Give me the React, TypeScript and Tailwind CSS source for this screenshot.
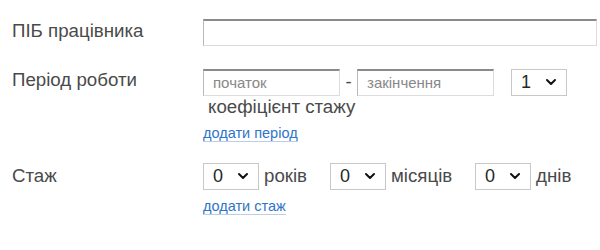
import { ChevronDown } from 'lucide-react'

function Select({ value }: { value: string }) {
  return (
    <div className="w-[56px] h-[27px] border border-[#c8c8c8] bg-white flex items-center justify-between pl-[9px] pr-[7px] text-[18px] text-[#1e2a1e]">
      <span>{value}</span>
      <ChevronDown size={16} strokeWidth={3} className="text-[#111]" />
    </div>
  )
}

function TextInput({ placeholder, className }: { placeholder?: string; className: string }) {
  return (
    <input
      type="text"
      placeholder={placeholder}
      className={`${className} h-[27px] border border-[#dcdcdc] border-t-[#8a8a8a] border-l-[#b8b8b8] border-t-2 bg-white px-[9px] text-[15px] text-[#333] placeholder:text-[#888] outline-none`}
    />
  )
}

function AddLink({ children }: { children: string }) {
  return (
    <a href="#" className="text-[14.5px] text-[#2f74c9] border-b border-[#b9cfe9] leading-[16px]">
      {children}
    </a>
  )
}

export default function App() {
  return (
    <div className="w-[600px] h-[250px] bg-white pl-[12px] pr-[3px] font-['Liberation_Sans',Arial,sans-serif] text-[#4a4a4a]">
      <div className="flex pt-[19px]">
        <div className="w-[191px] text-[18.7px] leading-[24px]">ПІБ працівника</div>
        <TextInput className="flex-1" />
      </div>

      <div className="flex pt-[22px]">
        <div className="w-[191px] text-[18.7px] leading-[24px]">Період роботи</div>
        <div className="flex flex-col">
          <div className="flex items-center">
            <TextInput placeholder="початок" className="w-[137px]" />
            <span className="w-[17px] text-center text-[18.7px]">-</span>
            <TextInput placeholder="закінчення" className="w-[137px]" />
            <div className="ml-[17px]">
              <Select value="1" />
            </div>
          </div>
          <div className="pl-[5px] text-[18.7px] leading-[22px]">коефіцієнт стажу</div>
          <div className="pt-[3px]">
            <AddLink>додати період</AddLink>
          </div>
        </div>
      </div>

      <div className="flex pt-[17px]">
        <div className="w-[191px] text-[18.7px] leading-[27px]">Стаж</div>
        <div className="flex flex-col">
          <div className="flex items-center text-[18.7px]">
            <Select value="0" />
            <span className="ml-[5px] w-[66px]">років</span>
            <Select value="0" />
            <span className="ml-[5px] w-[84px]">місяців</span>
            <Select value="0" />
            <span className="ml-[5px]">днів</span>
          </div>
          <div className="pt-[4px]">
            <AddLink>додати стаж</AddLink>
          </div>
        </div>
      </div>
    </div>
  )
}
